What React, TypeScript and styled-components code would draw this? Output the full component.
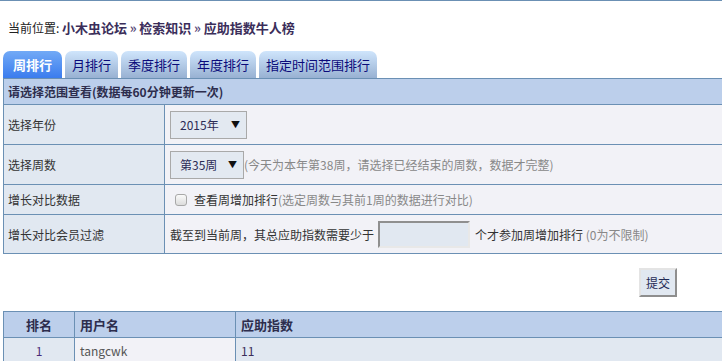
import { createGlobalStyle, styled } from "styled-components";

const GlobalStyle = createGlobalStyle`
  html, body {
    margin: 0;
    padding: 0;
    background: #fff;
    overflow: hidden;
  }
  body {
    font-family: "Noto Sans CJK SC", "Noto Sans", sans-serif;
    font-size: 12px;
    color: #333;
    border-top: 1px solid #6b90b4;
  }
`;

const tabs = ["周排行", "月排行", "季度排行", "年度排行", "指定时间范围排行"];

export default function App() {
  return (
    <>
      <GlobalStyle />
      <Page>
        <Breadcrumb>
          当前位置: <Crumb>小木虫论坛</Crumb> <Sep>»</Sep> <Crumb>检索知识</Crumb>{" "}
          <Sep>»</Sep> <Crumb>应助指数牛人榜</Crumb>
        </Breadcrumb>

        <TabBar>
          {tabs.map((t, i) => (
            <Tab key={t} active={i === 0}>
              {t}
            </Tab>
          ))}
        </TabBar>

        <Panel>
          <PanelHead>请选择范围查看(数据每60分钟更新一次)</PanelHead>
          <FormRow h={40}>
            <Label>选择年份</Label>
            <Field>
              <FakeSelect w={77}>
                2015年<Caret>▼</Caret>
              </FakeSelect>
            </Field>
          </FormRow>
          <FormRow h={40}>
            <Label>选择周数</Label>
            <Field>
              <FakeSelect w={74}>
                第35周<Caret>▼</Caret>
              </FakeSelect>
              <Hint>(今天为本年第38周，请选择已经结束的周数，数据才完整)</Hint>
            </Field>
          </FormRow>
          <FormRow h={30}>
            <Label>增长对比数据</Label>
            <Field>
              <Check type="checkbox" />
              <Plain>查看周增加排行</Plain>
              <Hint>(选定周数与其前1周的数据进行对比)</Hint>
            </Field>
          </FormRow>
          <FormRow h={39}>
            <Label>增长对比会员过滤</Label>
            <Field>
              <Plain>截至到当前周，其总应助指数需要少于</Plain>
              <NumInput type="text" />
              <Plain>个才参加周增加排行</Plain>
              <Hint>&nbsp;(0为不限制)</Hint>
            </Field>
          </FormRow>
        </Panel>

        <Actions>
          <Submit>提交</Submit>
        </Actions>

        <Rank>
          <RankRow head>
            <RankCell center>排名</RankCell>
            <RankCell>用户名</RankCell>
            <RankCell>应助指数</RankCell>
          </RankRow>
          <RankRow>
            <RankCell center tone="blue" ink="#4b2c7a">
              1
            </RankCell>
            <RankCell tone="light" ink="#555">
              tangcwk
            </RankCell>
            <RankCell tone="blue" ink="#3b2e5a">
              11
            </RankCell>
          </RankRow>
        </Rank>
      </Page>
    </>
  );
}

const Page = styled.div`
  width: 730px;
`;

const Breadcrumb = styled.div`
  padding: 17px 0 0 8px;
  height: 20px;
  line-height: 20px;
  color: #222;
`;

const Crumb = styled.b`
  font-size: 13px;
  color: #3b2e5a;
`;

const Sep = styled.b`
  font-size: 13px;
  color: #5b4a78;
`;

const TabBar = styled.div`
  display: flex;
  align-items: flex-end;
  gap: 3px;
  margin-top: 13px;
  padding-left: 3px;
  height: 27px;
`;

const Tab = styled.div<{ active?: boolean }>`
  height: 27px;
  line-height: 27px;
  padding: 0 ${({ active }) => (active ? "10px" : "7px")};
  border-radius: 7px 7px 0 0;
  font-size: 13px;
  font-weight: ${({ active }) => (active ? "bold" : "normal")};
  color: ${({ active }) => (active ? "#fff" : "#0a0a7a")};
  background: ${({ active }) =>
    active
      ? "linear-gradient(#72aaf6, #3b7cee)"
      : "linear-gradient(#cfe5fc, #98b1d2)"};
`;

const Panel = styled.div`
  margin-left: 3px;
  border-top: 1px solid #6b90b4;
  border-left: 1px solid #6b90b4;
`;

const PanelHead = styled.div`
  box-sizing: border-box;
  height: 26px;
  line-height: 25px;
  padding-left: 4px;
  background: #bccfeb;
  border-bottom: 1px solid #6b90b4;
  font-weight: bold;
  color: #2d2d4d;
`;

const FormRow = styled.div<{ h: number }>`
  box-sizing: border-box;
  display: grid;
  grid-template-columns: 161px 1fr;
  height: ${({ h }) => h}px;
  border-bottom: 1px solid #6b90b4;
`;

const Label = styled.div`
  display: flex;
  align-items: center;
  padding-left: 4px;
  background: #e1e8f1;
  border-right: 1px solid #6b90b4;
  color: #333;
`;

const Field = styled.div`
  display: flex;
  align-items: center;
  padding-left: 5px;
  background: #f2f2f7;
  white-space: nowrap;
`;

const FakeSelect = styled.div<{ w: number }>`
  box-sizing: border-box;
  display: flex;
  align-items: center;
  justify-content: space-between;
  width: ${({ w }) => w}px;
  height: 28px;
  padding: 0 6px 0 9px;
  border: 1px solid #a9a9a9;
  background: #e3e9f1;
  color: #2b2b55;
`;

const Caret = styled.span`
  font-size: 9px;
  color: #111;
`;

const Hint = styled.span`
  color: #888;
`;

const Plain = styled.span`
  color: #333;
`;

const Check = styled.input`
  appearance: none;
  box-sizing: border-box;
  width: 12px;
  height: 12px;
  margin: 0 7px 0 5px;
  border: 1px solid #a8a8a8;
  border-radius: 3px;
  background: linear-gradient(#fafafa, #dcdcdc);
`;

const NumInput = styled.input`
  box-sizing: border-box;
  width: 92px;
  height: 27px;
  margin: 0 5px 0 4px;
  border: 2px solid;
  border-color: #8f8f8f #e8e8e8 #e8e8e8 #8f8f8f;
  background: #e1e8f1;
`;

const Actions = styled.div`
  display: flex;
  justify-content: flex-end;
  padding: 14px 53px 14px 0;
`;

const Submit = styled.button`
  box-sizing: border-box;
  width: 38px;
  height: 29px;
  padding: 0;
  font-family: inherit;
  font-size: 12px;
  color: #1f2a55;
  background: #e1e8f1;
  border: 2px solid;
  border-color: #e4e4e4 #8e8e8e #8e8e8e #e4e4e4;
`;

const Rank = styled.div`
  margin-left: 3px;
  border-top: 1px solid #6b90b4;
  border-left: 1px solid #6b90b4;
`;

const RankRow = styled.div<{ head?: boolean }>`
  box-sizing: border-box;
  display: grid;
  grid-template-columns: 71px 161px 1fr;
  height: 26px;
  border-bottom: 1px solid #6b90b4;
  background: ${({ head }) => (head ? "#bccfeb" : "transparent")};
  font-size: ${({ head }) => (head ? "13px" : "12px")};
  font-weight: ${({ head }) => (head ? "bold" : "normal")};
  color: #2d2d4d;
`;

const RankCell = styled.div<{ center?: boolean; tone?: "blue" | "light"; ink?: string }>`
  display: flex;
  align-items: center;
  justify-content: ${({ center }) => (center ? "center" : "flex-start")};
  padding-left: ${({ center }) => (center ? "0" : "5px")};
  border-right: 1px solid #6b90b4;
  background: ${({ tone }) =>
    tone === "blue" ? "#e1e8f1" : tone === "light" ? "#f2f2f7" : "transparent"};
  color: ${({ ink }) => ink || "inherit"};
`;
